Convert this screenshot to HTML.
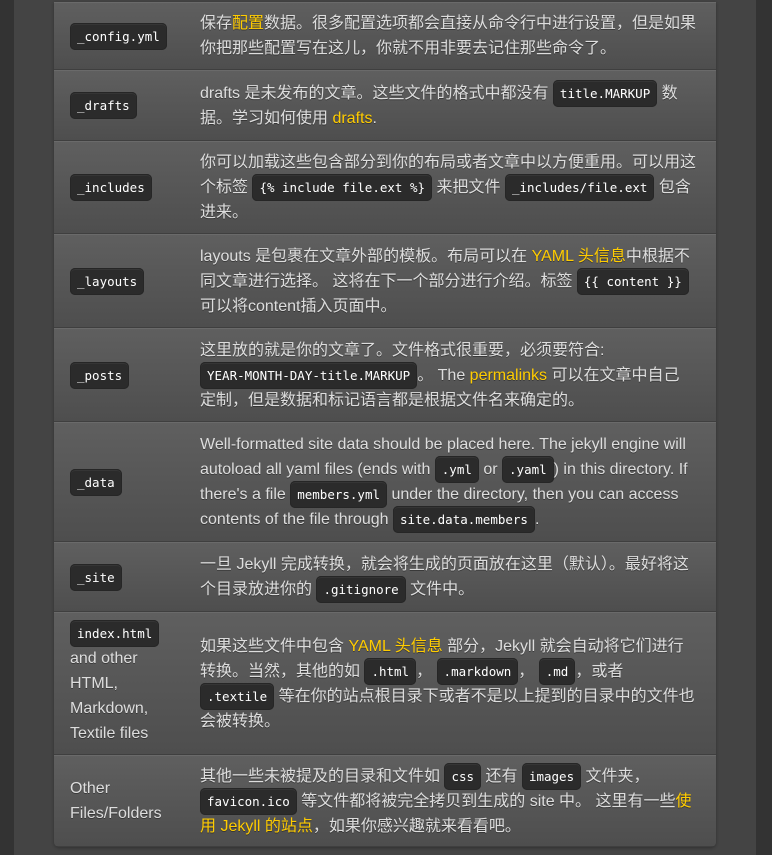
<!DOCTYPE html>
<html><head><meta charset="utf-8"><style>
html,body{margin:0;padding:0;}
body{width:772px;height:855px;overflow:hidden;background:linear-gradient(90deg,#333 0,#333 14px,#444 14px,#444 756px,#333 756px);font-family:"Liberation Sans","Noto Sans CJK SC",sans-serif;}
table{position:absolute;left:54px;top:2px;width:662px;border-collapse:separate;border-spacing:0;table-layout:fixed;border-radius:0 0 5px 5px;overflow:hidden;box-shadow:0 1px 3px rgba(0,0,0,.3);}
td{vertical-align:middle;color:#ddd;font-size:16px;line-height:25px;text-shadow:0 1px 0 rgba(0,0,0,.35);padding:0 16px;white-space:nowrap;
background:linear-gradient(#5f5f5f,#4e4e4e);border-top:1px solid #6a6a6a;border-bottom:1px solid #3f3f3f;}
td.a{width:114px;white-space:normal;}
td.b{padding-left:0;}
code{font-family:"DejaVu Sans Mono","Liberation Mono",monospace;font-size:12.5px;color:#fff;background:#2b2b2b;border:1px solid #262626;border-radius:5px;padding:5px 6px;text-shadow:none;box-shadow:inset 0 1px 0 rgba(255,255,255,.05);}
a{color:#fc0;text-decoration:none;}
</style></head><body>
<table>
<tr style="height:68px"><td class="a"><code>_config.yml</code></td><td class="b">保存<a>配置</a>数据。很多配置选项都会直接从命令行中进行设置，但是如果<br>你把那些配置写在这儿，你就不用非要去记住那些命令了。</td></tr>
<tr style="height:71px"><td class="a"><code>_drafts</code></td><td class="b">drafts 是未发布的文章。这些文件的格式中都没有 <code>title.MARKUP</code> 数<br>据。学习如何使用 <a>drafts</a>.</td></tr>
<tr style="height:93px"><td class="a"><code>_includes</code></td><td class="b">你可以加载这些包含部分到你的布局或者文章中以方便重用。可以用这<br>个标签 <code>{% include file.ext %}</code> 来把文件 <code>_includes/file.ext</code> 包含<br>进来。</td></tr>
<tr style="height:94px"><td class="a"><code>_layouts</code></td><td class="b">layouts 是包裹在文章外部的模板。布局可以在 <a>YAML 头信息</a>中根据不<br>同文章进行选择。 这将在下一个部分进行介绍。标签 <code>{{ content }}</code><br>可以将content插入页面中。</td></tr>
<tr style="height:94px"><td class="a"><code>_posts</code></td><td class="b">这里放的就是你的文章了。文件格式很重要，必须要符合:<br><code>YEAR-MONTH-DAY-title.MARKUP</code>。 The <a>permalinks</a> 可以在文章中自己<br>定制，但是数据和标记语言都是根据文件名来确定的。</td></tr>
<tr style="height:120px"><td class="a"><code>_data</code></td><td class="b">Well-formatted site data should be placed here. The jekyll engine will<br>autoload all yaml files (ends with <code>.yml</code> or <code>.yaml</code>) in this directory. If<br>there's a file <code>members.yml</code> under the directory, then you can access<br>contents of the file through <code>site.data.members</code>.</td></tr>
<tr style="height:70px"><td class="a"><code>_site</code></td><td class="b">一旦 Jekyll 完成转换，就会将生成的页面放在这里（默认）。最好将这<br>个目录放进你的 <code>.gitignore</code> 文件中。</td></tr>
<tr style="height:143px"><td class="a"><code>index.html</code><br>and other HTML, Markdown, Textile files</td><td class="b">如果这些文件中包含 <a>YAML 头信息</a> 部分，Jekyll 就会自动将它们进行<br>转换。当然，其他的如 <code>.html</code>， <code>.markdown</code>， <code>.md</code>，或者<br><code>.textile</code> 等在你的站点根目录下或者不是以上提到的目录中的文件也<br>会被转换。</td></tr>
<tr style="height:92px"><td class="a">Other Files/Folders</td><td class="b">其他一些未被提及的目录和文件如 <code>css</code> 还有 <code>images</code> 文件夹，<br><code>favicon.ico</code> 等文件都将被完全拷贝到生成的 site 中。 这里有一些<a>使<br>用 Jekyll 的站点</a>，如果你感兴趣就来看看吧。</td></tr>
</table>
</body></html>
